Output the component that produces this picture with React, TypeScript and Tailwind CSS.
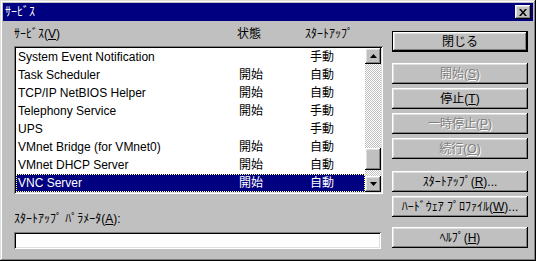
import React from 'react';

type Service = { name: string; status: string; startup: string };

const services: Service[] = [
  { name: 'System Event Notification', status: '', startup: '手動' },
  { name: 'Task Scheduler', status: '開始', startup: '自動' },
  { name: 'TCP/IP NetBIOS Helper', status: '開始', startup: '自動' },
  { name: 'Telephony Service', status: '開始', startup: '手動' },
  { name: 'UPS', status: '', startup: '手動' },
  { name: 'VMnet Bridge (for VMnet0)', status: '開始', startup: '自動' },
  { name: 'VMnet DHCP Server', status: '開始', startup: '自動' },
  { name: 'VNC Server', status: '開始', startup: '自動' },
];

const raised =
  'bg-[#c0c0c0] shadow-[inset_-1px_-1px_#000,inset_1px_1px_#fff,inset_-2px_-2px_#808080,inset_2px_2px_#dfdfdf]';
const sunken =
  'shadow-[inset_1px_1px_#808080,inset_-1px_-1px_#fff,inset_2px_2px_#000,inset_-2px_-2px_#dfdfdf]';

const Btn: React.FC<{ label: React.ReactNode; disabled?: boolean; isDefault?: boolean; className?: string }> = ({
  label,
  disabled,
  isDefault,
  className,
}) => (
  <div className={`h-[21px] w-[136px] ${isDefault ? 'border border-black' : ''} ${className ?? ''}`}>
    <div
      className={`flex h-full w-full items-center justify-center ${raised} ${
        disabled ? 'text-[#808080] [text-shadow:1px_1px_0_#fff]' : 'text-black'
      }`}
    >
      {label}
    </div>
  </div>
);

const Arrow: React.FC<{ up?: boolean }> = ({ up }) => (
  <div className={`flex h-[16px] w-[16px] items-center justify-center ${raised}`}>
    <svg width="7" height="4" viewBox="0 0 7 4">
      {up ? <polygon points="3.5,0 7,4 0,4" fill="#000" /> : <polygon points="0,0 7,0 3.5,4" fill="#000" />}
    </svg>
  </div>
);

const App: React.FC = () => {
  return (
    <div
      className="relative h-[261px] w-[536px] overflow-hidden bg-[#c0c0c0] p-[3px] text-[12px] leading-[14px] text-black shadow-[inset_-1px_-1px_#000,inset_1px_1px_#dfdfdf,inset_-2px_-2px_#808080,inset_2px_2px_#fff]"
      style={{ fontFamily: '"Liberation Sans", "Noto Sans CJK JP", sans-serif' }}
    >
      {/* title bar */}
      <div className="flex h-[18px] items-center justify-between bg-[#000080] pl-[2px] pr-[2px]">
        <span className="text-white">ｻｰﾋﾞｽ</span>
        <div className={`flex h-[14px] w-[16px] items-center justify-center ${raised}`}>
          <svg width="8" height="7" viewBox="0 0 8 7">
            <path d="M0 0h2l2 2.5L6 0h2L5 3.5 8 7H6L4 4.5 2 7H0l3-3.5z" fill="#000" />
          </svg>
        </div>
      </div>

      <div className="flex">
        {/* left column */}
        <div className="ml-[11px] w-[369px]">
          <div className="mt-[6px] flex h-[14px]">
            <span className="w-[223px]">
              ｻｰﾋﾞｽ(<span className="underline">V</span>)
            </span>
            <span className="w-[68px]">状態</span>
            <span>ｽﾀｰﾄｱｯﾌﾟ</span>
          </div>

          <div className={`mt-[5px] flex h-[148px] bg-white p-[2px] ${sunken}`}>
            <div className="flex-1">
              {services.map((s, i) => {
                const sel = i === services.length - 1;
                return (
                  <div
                    key={s.name}
                    className={`flex h-[18px] items-center pl-[2px] ${
                      sel ? 'bg-[#000080] text-white outline-1 -outline-offset-1 outline-dotted outline-[#ffff80]' : ''
                    }`}
                  >
                    <span className="w-[221px] whitespace-nowrap">{s.name}</span>
                    <span className="w-[71px]">{s.status}</span>
                    <span>{s.startup}</span>
                  </div>
                );
              })}
            </div>
            <div className="flex w-[16px] flex-col">
              <Arrow up />
              <div className="flex flex-1 flex-col bg-[repeating-conic-gradient(#c0c0c0_0%_25%,#fff_0%_50%)] bg-[length:2px_2px]">
                <div className="flex-1" />
                <div className={`h-[22px] w-[16px] ${raised}`} />
                <div className="h-[6px]" />
              </div>
              <Arrow />
            </div>
          </div>

          <div className="mt-[18px] h-[14px]">
            ｽﾀｰﾄｱｯﾌﾟ ﾊﾟﾗﾒｰﾀ(<span className="underline">A</span>):
          </div>
          <div className={`mt-[6px] h-[17px] w-[367px] bg-white ${sunken}`} />
        </div>

        {/* right column */}
        <div className="ml-[9px] flex w-[136px] flex-col">
          <Btn isDefault label="閉じる" className="mt-[10px]" />
          <Btn
            disabled
            className="mt-[11px]"
            label={
              <>
                開始(<span className="underline">S</span>)
              </>
            }
          />
          <Btn
            className="mt-[4px]"
            label={
              <>
                停止(<span className="underline">T</span>)
              </>
            }
          />
          <Btn
            disabled
            className="mt-[4px]"
            label={
              <>
                一時停止(<span className="underline">P</span>)
              </>
            }
          />
          <Btn
            disabled
            className="mt-[4px]"
            label={
              <>
                続行(<span className="underline">O</span>)
              </>
            }
          />
          <Btn
            className="mt-[12px]"
            label={
              <>
                ｽﾀｰﾄｱｯﾌﾟ(<span className="underline">R</span>)...
              </>
            }
          />
          <Btn
            className="mt-[4px]"
            label={
              <>
                ﾊｰﾄﾞｳｪｱ ﾌﾟﾛﾌｧｲﾙ(<span className="underline">W</span>)...
              </>
            }
          />
          <Btn
            className="mt-[10px]"
            label={
              <>
                ﾍﾙﾌﾟ(<span className="underline">H</span>)
              </>
            }
          />
        </div>
      </div>
    </div>
  );
};

export default App;
